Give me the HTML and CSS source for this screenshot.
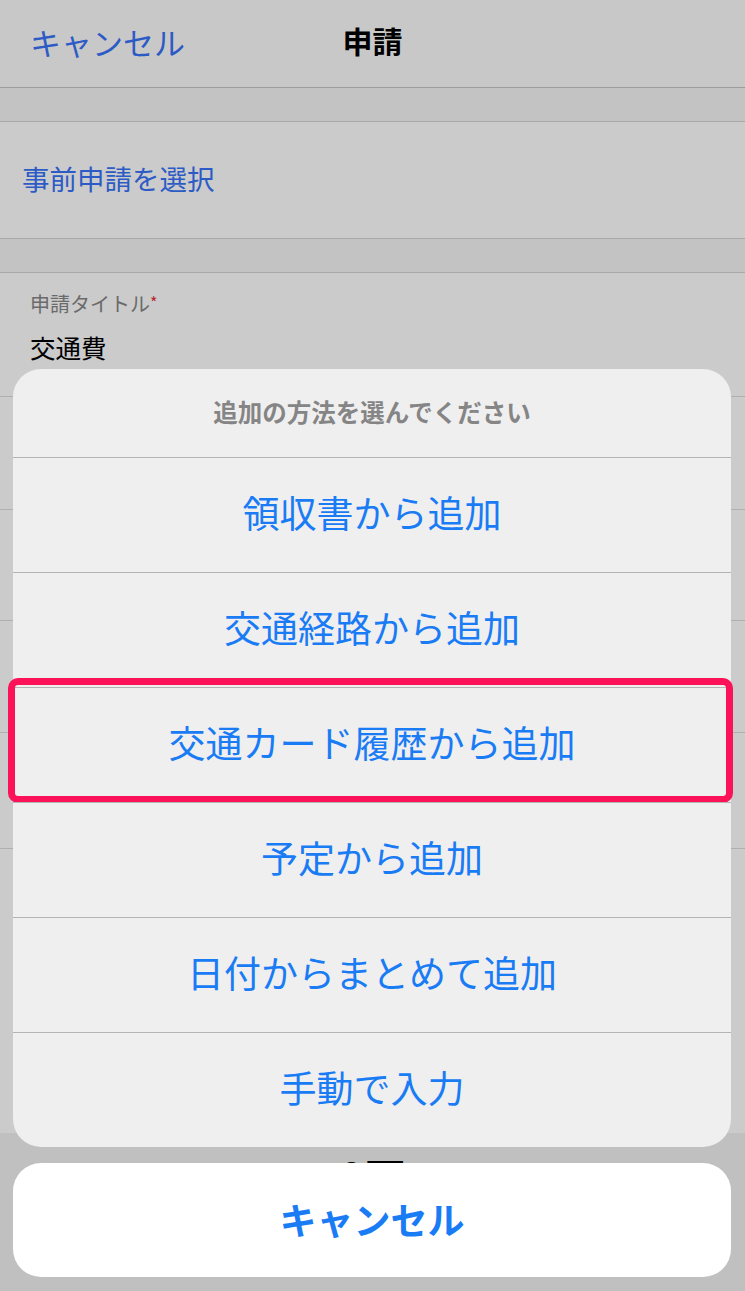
FILE: index.html
```html
<!DOCTYPE html>
<html lang="ja">
<head>
  <meta charset="UTF-8" />
  <meta name="viewport" content="width=device-width, initial-scale=1.0" />
  <title>申請</title>
  <link rel="stylesheet" href="styles.css">
</head>
<body>

  <div class="page">
    <header class="nav">
      <span class="nav-cancel">キャンセル</span>
      <span class="nav-title">申請</span>
    </header>

    <div class="band"></div>

    <div class="row link-row">事前申請を選択</div>

    <div class="band"></div>

    <div class="field">
      <div class="field-label">申請タイトル<span class="required">*</span></div>
      <div class="field-value">交通費</div>
    </div>
    <div class="field-row r1"></div>
    <div class="field-row r2"></div>
    <div class="field-row r3"></div>
    <div class="field-row r4"></div>

    <div class="spacer"></div>

    <div class="total">0円</div>
  </div>

  <div class="overlay">
    <div class="sheet">
      <div class="sheet-title">追加の方法を選んでください</div>
      <div class="sheet-item">領収書から追加</div>
      <div class="sheet-item">交通経路から追加</div>
      <div class="sheet-item highlighted">交通カード履歴から追加</div>
      <div class="sheet-item">予定から追加</div>
      <div class="sheet-item">日付からまとめて追加</div>
      <div class="sheet-item">手動で入力</div>
    </div>
    <div class="sheet-cancel">キャンセル</div>
  </div>

</body>
</html>
```

FILE: styles.css
```css
* {
  box-sizing: border-box;
}
html, body {
  margin: 0;
  height: 100%;
}
body {
  font-family: "Noto Sans CJK JP", "Noto Sans", sans-serif;
  background-color: #cbcbcb;
  color: #000;
  overflow: hidden;
  position: relative;
}
.page {
  height: 1291px;
  display: flex;
  flex-direction: column;
}
.nav {
  height: 88px;
  background-color: #c8c8c8;
  border-bottom: 1px solid #9c9c9c;
  display: flex;
  align-items: center;
  position: relative;
  padding: 0 30px 4px;
}
.nav-cancel {
  color: #2d5bc6;
  font-size: 31px;
  line-height: 1;
}
.nav-title {
  position: absolute;
  left: 0;
  right: 0;
  text-align: center;
  font-size: 30px;
  font-weight: 700;
  line-height: 1;
  padding-bottom: 4px;
}
.band {
  height: 34px;
  background-color: #c4c3c4;
  border-bottom: 1px solid #a9a9a9;
}
.row {
  height: 117px;
  border-bottom: 1px solid #a9a9a9;
  display: flex;
  align-items: center;
  padding: 0 22px 4px;
}
.link-row {
  color: #2d5bc6;
  font-size: 27.5px;
}
.field {
  height: 124px;
  border-bottom: 1px solid #b0b0b0;
  padding: 15px 30px 0;
}
.field-label {
  color: #6a6a6a;
  font-size: 20px;
  line-height: 28px;
}
.required {
  color: #b8262e;
  font-size: 16px;
  vertical-align: 3px;
}
.field-value {
  font-size: 25.5px;
  line-height: 36px;
  margin-top: 11px;
}
.field-row {
  border-bottom: 1px solid #b0b0b0;
}
.r1 { height: 113px; }
.r2 { height: 111px; }
.r3 { height: 112px; }
.r4 { height: 116px; }
.spacer {
  height: 284px;
}
.total {
  flex: 1;
  background-color: #c1c0c1;
  text-align: center;
  font-size: 42px;
  font-weight: 700;
  line-height: 1;
  padding-top: 22px;
}

/* action sheet */
.overlay {
  position: absolute;
  inset: 0;
  display: flex;
  flex-direction: column;
  justify-content: flex-end;
  gap: 16px;
  padding: 0 14px 14px 13px;
}
.sheet {
  background-color: #f0eff0;
  border-radius: 28px;
}
.sheet-title {
  height: 88px;
  display: flex;
  align-items: center;
  justify-content: center;
  color: #858585;
  font-size: 24.5px;
  font-weight: 700;
  padding-bottom: 4px;
}
.sheet-item {
  height: 115px;
  border-top: 1px solid #b4b4b4;
  display: flex;
  align-items: center;
  justify-content: center;
  color: #1a7cf5;
  font-size: 37px;
  padding-bottom: 6px;
  position: relative;
}
.highlighted::after {
  content: "";
  position: absolute;
  top: -10px;
  left: -5px;
  right: -2px;
  bottom: -1px;
  border: 7px solid #fb1258;
  border-radius: 10px;
}
.sheet-cancel {
  height: 114px;
  background-color: #fff;
  border-radius: 28px;
  display: flex;
  align-items: center;
  justify-content: center;
  color: #1a7cf5;
  font-size: 37px;
  font-weight: 700;
  padding-bottom: 2px;
}
```
